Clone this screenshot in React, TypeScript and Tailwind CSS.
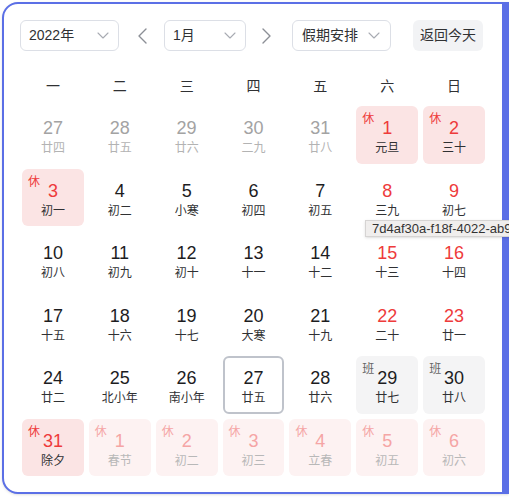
import React from 'react';

type Day = {
  d: number;
  l: string;
  kind: 'prev' | 'cur' | 'next';
  red?: boolean;
  badge?: '休' | '班';
  today?: boolean;
};

const weekdays = ['一', '二', '三', '四', '五', '六', '日'];

const days: Day[] = [
  { d: 27, l: '廿四', kind: 'prev' },
  { d: 28, l: '廿五', kind: 'prev' },
  { d: 29, l: '廿六', kind: 'prev' },
  { d: 30, l: '二九', kind: 'prev' },
  { d: 31, l: '廿八', kind: 'prev' },
  { d: 1, l: '元旦', kind: 'cur', red: true, badge: '休' },
  { d: 2, l: '三十', kind: 'cur', red: true, badge: '休' },

  { d: 3, l: '初一', kind: 'cur', red: true, badge: '休' },
  { d: 4, l: '初二', kind: 'cur' },
  { d: 5, l: '小寒', kind: 'cur' },
  { d: 6, l: '初四', kind: 'cur' },
  { d: 7, l: '初五', kind: 'cur' },
  { d: 8, l: '三九', kind: 'cur', red: true },
  { d: 9, l: '初七', kind: 'cur', red: true },

  { d: 10, l: '初八', kind: 'cur' },
  { d: 11, l: '初九', kind: 'cur' },
  { d: 12, l: '初十', kind: 'cur' },
  { d: 13, l: '十一', kind: 'cur' },
  { d: 14, l: '十二', kind: 'cur' },
  { d: 15, l: '十三', kind: 'cur', red: true },
  { d: 16, l: '十四', kind: 'cur', red: true },

  { d: 17, l: '十五', kind: 'cur' },
  { d: 18, l: '十六', kind: 'cur' },
  { d: 19, l: '十七', kind: 'cur' },
  { d: 20, l: '大寒', kind: 'cur' },
  { d: 21, l: '十九', kind: 'cur' },
  { d: 22, l: '二十', kind: 'cur', red: true },
  { d: 23, l: '廿一', kind: 'cur', red: true },

  { d: 24, l: '廿二', kind: 'cur' },
  { d: 25, l: '北小年', kind: 'cur' },
  { d: 26, l: '南小年', kind: 'cur' },
  { d: 27, l: '廿五', kind: 'cur', today: true },
  { d: 28, l: '廿六', kind: 'cur' },
  { d: 29, l: '廿七', kind: 'cur', badge: '班' },
  { d: 30, l: '廿八', kind: 'cur', badge: '班' },

  { d: 31, l: '除夕', kind: 'cur', red: true, badge: '休' },
  { d: 1, l: '春节', kind: 'next', badge: '休' },
  { d: 2, l: '初二', kind: 'next', badge: '休' },
  { d: 3, l: '初三', kind: 'next', badge: '休' },
  { d: 4, l: '立春', kind: 'next', badge: '休' },
  { d: 5, l: '初五', kind: 'next', badge: '休' },
  { d: 6, l: '初六', kind: 'next', badge: '休' },
];

function ChevronDown() {
  return (
    <svg width="12" height="7" viewBox="0 0 12 7" fill="none">
      <path d="M1 1l5 5 5-5" stroke="#a8abb2" strokeWidth="1.1" strokeLinecap="round" strokeLinejoin="round" />
    </svg>
  );
}

function Arrow({ dir }: { dir: 'left' | 'right' }) {
  return (
    <svg width="16" height="16" viewBox="0 0 16 16" fill="none" className="shrink-0">
      {dir === 'left' ? (
        <path d="M11 1L4 8l7 7" stroke="#8c8f96" strokeWidth="1.4" strokeLinecap="round" strokeLinejoin="round" />
      ) : (
        <path d="M5 1l7 7-7 7" stroke="#8c8f96" strokeWidth="1.4" strokeLinecap="round" strokeLinejoin="round" />
      )}
    </svg>
  );
}

function Select({ label, w, pl, pr }: { label: string; w: string; pl: string; pr: string }) {
  return (
    <div
      className={`${w} ${pl} ${pr} h-[31px] shrink-0 flex items-center justify-between rounded-[6px] border border-[#dcdfe6] bg-white text-[14px] text-[#303133]`}
    >
      <span>{label}</span>
      <ChevronDown />
    </div>
  );
}

function Cell({ day }: { day: Day }) {
  let bg = 'bg-white';
  let num = 'text-[#1d1d1f]';
  let lunar = 'text-[#303133]';
  let badge = 'text-[#ee3b3b]';

  if (day.kind === 'prev') {
    num = 'text-[#a3a3a3]';
    lunar = 'text-[#b3b3b3]';
  }
  if (day.red) num = 'text-[#ee3b3b]';
  if (day.badge === '休') {
    if (day.kind === 'next') {
      bg = 'bg-[#fdf2f2]';
      num = 'text-[#f5a5a5]';
      lunar = 'text-[#b8b8b8]';
      badge = 'text-[#f5a5a5]';
    } else {
      bg = 'bg-[#fbe4e4]';
    }
  }
  if (day.badge === '班') {
    bg = 'bg-[#f4f4f5]';
    badge = 'text-[#666666]';
  }

  return (
    <div
      className={`relative h-[57.5px] rounded-[6px] border-2 ${
        day.today ? 'border-[#bfc3cb]' : 'border-transparent'
      } ${bg} flex flex-col items-center pt-[9px]`}
    >
      {day.badge && (
        <span className={`absolute top-[4px] left-[4px] text-[12px] leading-[14px] ${badge}`}>{day.badge}</span>
      )}
      <span className={`text-[18px] leading-[22px] ${num}`}>{day.d}</span>
      <span className={`text-[12px] leading-[16px] mt-[1px] ${lunar}`}>{day.l}</span>
    </div>
  );
}

export default function App() {
  return (
    <div
      className="relative w-[509px] h-[500px] overflow-hidden bg-white pt-[2px] pl-[2px]"
      style={{ fontFamily: '"Liberation Sans", "Noto Sans CJK SC", sans-serif' }}
    >
      <div className="h-[492px] border-2 border-r-[7px] border-[#5b6fe6] rounded-tl-[16px] rounded-bl-[16px] bg-white shadow-sm pt-[16px] pl-[16px]">
        {/* toolbar */}
        <div className="flex items-center">
          <Select label="2022年" w="w-[99px]" pl="pl-[8px]" pr="pr-[9px]" />
          <div className="ml-[16px]">
            <Arrow dir="left" />
          </div>
          <div className="ml-[13px]">
            <Select label="1月" w="w-[82px]" pl="pl-[8px]" pr="pr-[9px]" />
          </div>
          <div className="ml-[12px]">
            <Arrow dir="right" />
          </div>
          <div className="ml-[18px]">
            <Select label="假期安排" w="w-[99px]" pl="pl-[9px]" pr="pr-[10px]" />
          </div>
          <button className="ml-[22px] w-[70px] h-[31px] rounded-[6px] bg-[#f2f3f5] text-[14px] text-[#303133]">
            返回今天
          </button>
        </div>

        {/* weekdays */}
        <div className="ml-[2px] w-[463px] grid grid-cols-7 gap-x-[5px] mt-[25px] mb-[10px]">
          {weekdays.map((w) => (
            <div key={w} className="text-center text-[14px] leading-[20px] text-[#303133]">
              {w}
            </div>
          ))}
        </div>

        {/* days */}
        <div className="ml-[2px] w-[463px] grid grid-cols-7 gap-x-[5px] gap-y-[5px]">
          {days.map((d, i) => (
            <Cell key={i} day={d} />
          ))}
        </div>
      </div>

      {/* hover title tooltip */}
      <div className="absolute left-[365px] top-[220px] h-[17px] w-[160px] overflow-hidden whitespace-nowrap border border-[#d6d4d3] bg-[#f0eeed] px-[6px] text-[13px] leading-[15px] text-[#333333] shadow-sm">
        7d4af30a-f18f-4022-ab9
      </div>
    </div>
  );
}
